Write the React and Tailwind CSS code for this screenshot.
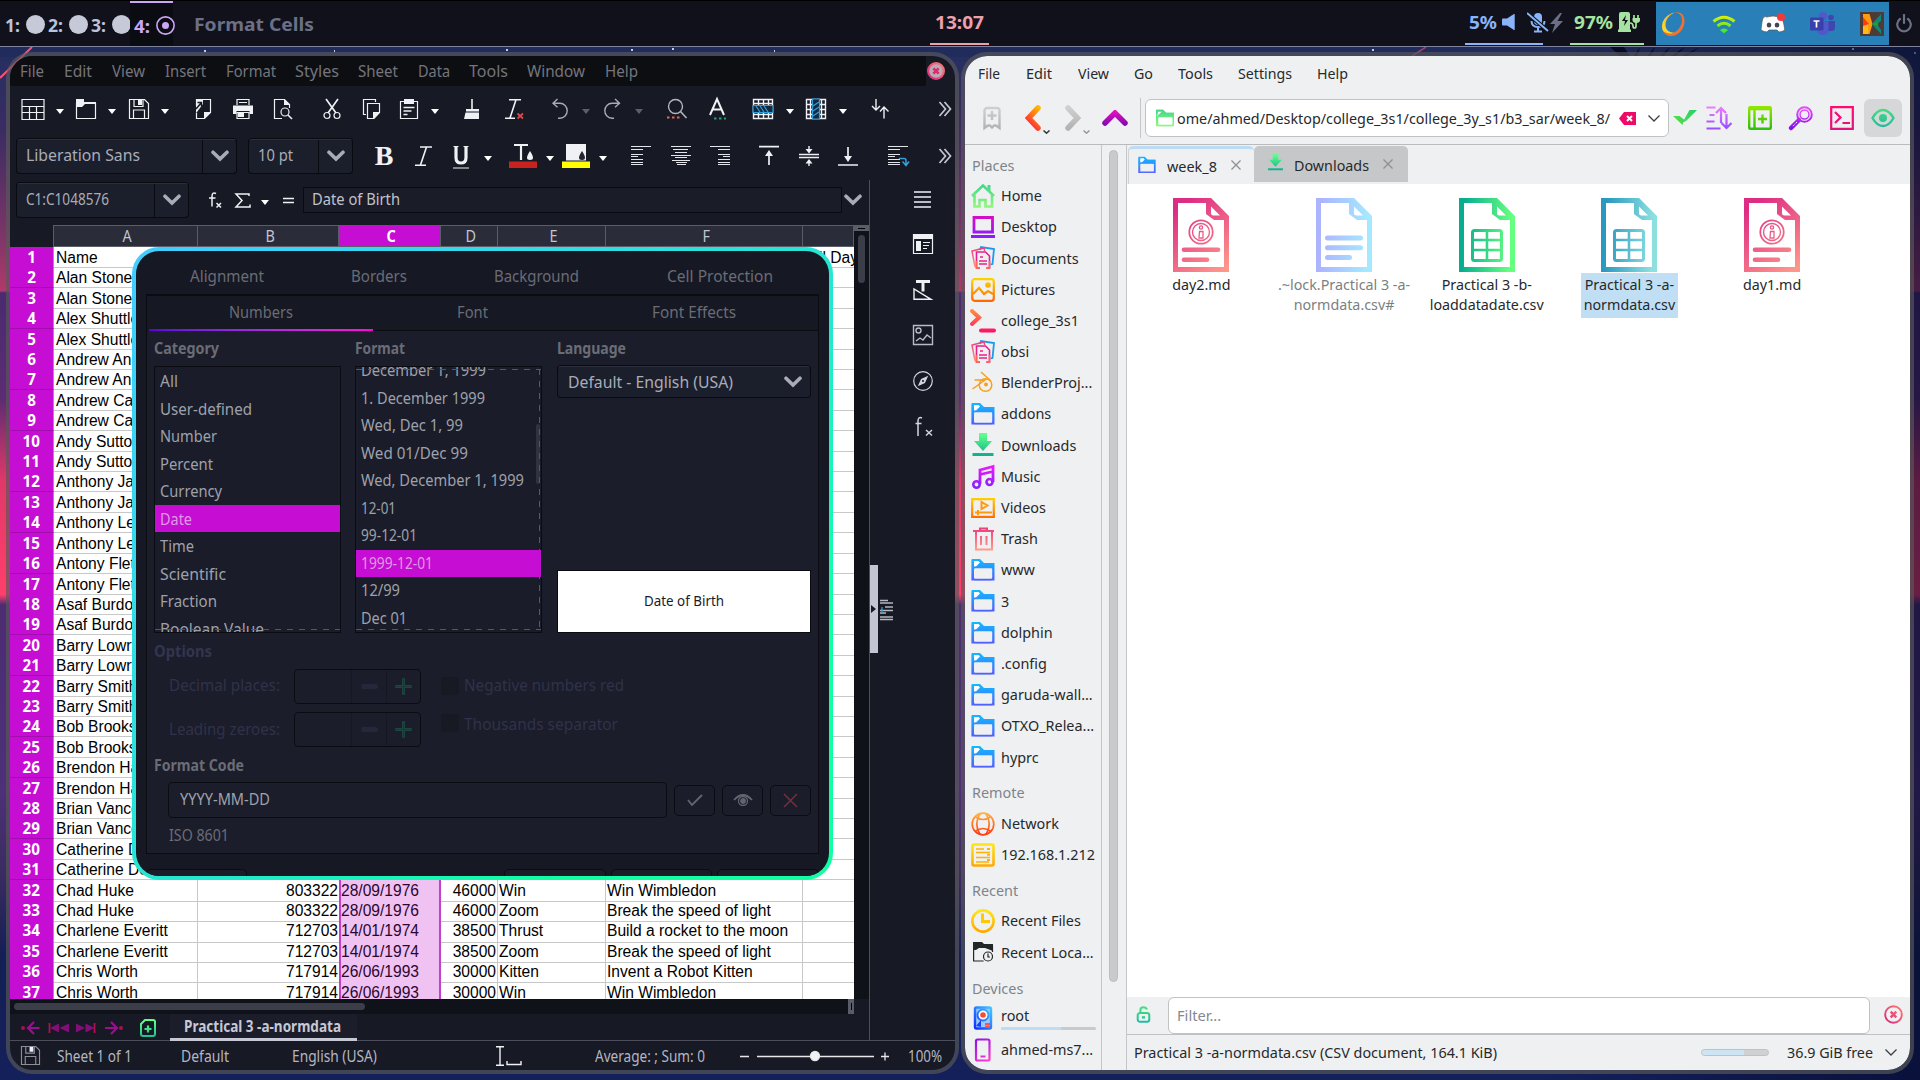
import React, { useLayoutEffect, useRef, useState } from "react";

/* Text squeezed or stretched horizontally to fill the width given by its class. */
function Fit({ className = "", children }) {
  const outer = useRef(null);
  const inner = useRef(null);
  const [scale, setScale] = useState(1);
  useLayoutEffect(() => {
    const box = parseFloat(getComputedStyle(outer.current).width);
    const text = parseFloat(getComputedStyle(inner.current).width);
    if (text) setScale(box / text);
  }, []);
  return (
    <span ref={outer} className={"inline-block shrink-0 whitespace-nowrap " + className}>
      <span ref={inner} className="inline-block origin-left" style={{ transform: `scaleX(${scale})` }}>
        {children}
      </span>
    </span>
  );
}

const GRADS = [
  ["gGreen", "#46d98a", "#8df77a"],
  ["gPurple", "#d40dc8", "#8a1cff"],
  ["gOrange", "#ffd000", "#ff6a00"],
  ["gRed", "#ff8a3c", "#ff1564"],
  ["gBlue", "#12b8ff", "#5060ff"],
  ["gDown", "#5cff88", "#10b090"],
  ["gMusic", "#e818ff", "#8a20ff"],
  ["gTrash", "#f0407c", "#ff9a8c"],
  ["gNet", "#ffb040", "#ff3c10"],
  ["gYellow", "#ffe414", "#ffaa00"],
  ["gSort", "#f07cff", "#9a50ff"],
  ["gLime", "#8fe600", "#30c010"],
  ["gMag", "#ee48ff", "#8a10f0"],
  ["gTeal", "#48e07c", "#20b8a0"],
  ["gWifi", "#f4f000", "#20e838"],
  ["gGray", "#cfcfcf", "#b4b4b4"],
  ["gHot", "#ff0a70", "#e0147a"],
];

function Defs() {
  return (
    <svg className="absolute h-0 w-0">
      <defs>
        {GRADS.map(([id, a, b]) => (
          <linearGradient key={id} id={id} gradientUnits="userSpaceOnUse" x1="0" y1="2" x2="0" y2="22">
            <stop offset="0" stopColor={a} />
            <stop offset="1" stopColor={b} />
          </linearGradient>
        ))}
        <linearGradient id="gBack" gradientUnits="userSpaceOnUse" x1="4" y1="20" x2="20" y2="4">
          <stop offset="0" stopColor="#ff1040" />
          <stop offset="1" stopColor="#ffb800" />
        </linearGradient>
        <linearGradient id="gUp" gradientUnits="userSpaceOnUse" x1="0" y1="0" x2="0" y2="16">
          <stop offset="0" stopColor="#f010c0" />
          <stop offset="1" stopColor="#7a08b0" />
        </linearGradient>
        <linearGradient id="gCheck" gradientUnits="userSpaceOnUse" x1="0" y1="20" x2="24" y2="4">
          <stop offset="0" stopColor="#62dc48" />
          <stop offset="1" stopColor="#22d268" />
        </linearGradient>
        <linearGradient id="gDisk" gradientUnits="userSpaceOnUse" x1="2" y1="20" x2="22" y2="4">
          <stop offset="0" stopColor="#1030ff" />
          <stop offset="1" stopColor="#40c8ff" />
        </linearGradient>
        <linearGradient id="gPhone" gradientUnits="userSpaceOnUse" x1="4" y1="2" x2="20" y2="22">
          <stop offset="0" stopColor="#9010e8" />
          <stop offset="1" stopColor="#ff40c8" />
        </linearGradient>
        <linearGradient id="gClose" gradientUnits="userSpaceOnUse" x1="2" y1="22" x2="22" y2="2">
          <stop offset="0" stopColor="#d82a80" />
          <stop offset="1" stopColor="#ff7a70" />
        </linearGradient>
      </defs>
    </svg>
  );
}

function Ico({ className = "h-5 w-5", vb = "0 0 20 20", children, sw = 1.2, color = "#f0f1f4" }) {
  return (
    <svg className={"block shrink-0 overflow-visible " + className} viewBox={vb} fill="none" stroke={color} strokeWidth={sw}>
      {children}
    </svg>
  );
}

const Caret = ({ className = "", dim }) => (
  <svg className={"mt-1 block h-[5px] w-2 shrink-0 " + className} viewBox="0 0 8 5">
    <path d="M0 0h8L4 5z" fill={dim ? "#5c5e69" : "#ffffff"} />
  </svg>
);

const Chevron = ({ className = "h-3 w-[18px]", color = "#a9acb8" }) => (
  <svg className={"block shrink-0 " + className} viewBox="0 0 18 12" fill="none" stroke={color} strokeWidth="3.6" strokeLinecap="round" strokeLinejoin="miter">
    <path d="M2 2.2 9 9l7-6.800" />
  </svg>
);

/* ---------- office toolbar drawings ---------- */
const I = {
  sheet: (
    <>
      <path d="M-1 .5h22v20h-22zM-1 7.500h22M-1 13.500h22M6.500 8v12M13.500 8v12" />
    </>
  ),
  folder: (
    <>
      <path d="M.5 4.500h19v15H.5z" />
      <path d="M0 0h8v3h12v2H9L6 8H0z" fill="#f0f1f4" stroke="none" />
    </>
  ),
  save: (
    <>
      <path d="M.5.500h15l4 4v15H.5zM4.500 19.500V11h11v8.500M5 .5v7h9v-7" />
      <path d="M9 1h4v5H9z" fill="#f0f1f4" stroke="none" />
    </>
  ),
  export: (
    <>
      <path d="M3.500 7V.500h14v13l-6 6h-8v-6" />
      <path d="M3 0h7v5L4 13H3zM11 13h7l-7 7z" fill="#f0f1f4" stroke="none" />
      <path d="M3 10 8.500 3.500M4.500 3.500h4v4" stroke="#181924" strokeWidth="1.500" />
    </>
  ),
  print: (
    <>
      <path d="M4 6V.500h12V6M6 3.500h8" />
      <path d="M0 6.500h20V15h-3.500v-3h-13v3H0z" fill="#f0f1f4" stroke="none" />
      <path d="M4 13.500h12v6H4z" />
      <path d="M5 14h6v4H5z" fill="#f0f1f4" stroke="none" />
    </>
  ),
  preview: (
    <>
      <path d="M9 19.500H1.500V.500h10l5 5V9" />
      <path d="M11 0v6h6z" fill="#f0f1f4" stroke="none" />
      <circle cx="12" cy="13" r="4" />
      <path d="m15 16 4 4" strokeWidth="1.600" />
    </>
  ),
  cut: (
    <>
      <path d="M4 0 14 14M16 0 6 14" strokeWidth="1.700" />
      <circle cx="5" cy="16.500" r="3" />
      <circle cx="15" cy="16.500" r="3" />
    </>
  ),
  copy: (
    <>
      <path d="M5 15.500H2.500v-15h12V3" />
      <path d="M6.500 4.500h12v9l-5.500 6H6.500z" />
      <path d="M12 13h7l-7 7z" fill="#f0f1f4" stroke="none" />
    </>
  ),
  paste: (
    <>
      <path d="M1.500 2.500h17v17h-17z" />
      <path d="M5 0h10v5H5z" fill="#f0f1f4" stroke="none" />
      <path d="M4.500 8.500h11M4.500 12h8M4.500 15.500h4" strokeWidth="1.400" />
    </>
  ),
  broom: (
    <>
      <path d="M10 0v10" strokeWidth="1.600" />
      <path d="M4 10h13v2.500H4zM3.500 13.500h13.500V20H2z" fill="#f0f1f4" stroke="none" />
    </>
  ),
  clear: (
    <>
      <path d="M4 .7h12M0 19.300h10M11 .7 5 19" strokeWidth="1.600" />
      <path d="m12.500 14.500 5.500 5m0-5-5.500 5" stroke="#e04a4a" strokeWidth="1.700" />
    </>
  ),
  undo: <path d="M7.500 0 3 4.300l4.500 4M3 4.300h7a7 7.300 0 0 1 0 15H8" stroke="#a9abb3" strokeWidth="1.400" />,
  redo: <path d="M13 0l4.500 4.300-4.500 4M17 4.300h-7a7 7.300 0 0 0 0 15h2" stroke="#a9abb3" strokeWidth="1.400" />,
  find: (
    <>
      <circle cx="8.500" cy="7.500" r="7" stroke="#b4b6bd" strokeWidth="1.400" />
      <path d="m13.500 12.500 6 6.500" stroke="#b4b6bd" strokeWidth="1.600" />
      <path d="M0 18.500h13" stroke="#e0694a" strokeWidth="2" strokeDasharray="2.500 2.500" />
    </>
  ),
  spell: (
    <>
      <path d="M2 16 9 0l7 16M5 10.500h8" strokeWidth="2" />
      <path d="M6 19.500h12" stroke="#26a269" strokeWidth="2" strokeDasharray="2.500 2.500" />
    </>
  ),
  rows: (
    <>
      <path d="M.5.500h19v19H.5zM.5 4.500h19M.5 15.500h19M5.500.500v19M10.500.500v19M15.500.500v19" strokeWidth="1.400" />
      <path d="M0 6.500h20v7H0z" fill="#132a3f" stroke="#33a0dc" />
      <path d="m3 7 4 6m0-6 4 6m0-6 4 6" stroke="#33a0dc" />
    </>
  ),
  cols: (
    <>
      <path d="M.5.500h19v19H.5zM.5 5.500h19M.5 10.500h19M.5 15.500h19M4.500.500v19M15.500.500v19" strokeWidth="1.400" />
      <path d="M6.500 0v20h7V0z" fill="#132a3f" stroke="#33a0dc" />
      <path d="m7 7 6-4m-6 9 6-4m-6 9 6-4" stroke="#33a0dc" />
    </>
  ),
  sort: <path d="M4 0v10M0 7l4 4 4-4M12 19.500V8M8 12.500 12 8l4.500 4.500" strokeWidth="1.400" />,
  more: <path d="m4.500 3 6 7-6 7m5-14 6 7-6 7" stroke="#c3c5cf" strokeWidth="1.700" />,
  alignL: <path d="M0 .5h20M0 3.500h12M0 8.500h12M0 10.500h7M0 13.500h12M0 16.500h12M0 18.500h12" stroke="#e2e4e9" />,
  alignC: <path d="M0 .5h20M2 3.500h15M4 6.500h12M0 9.500h20M4 11.500h12M1 14.500h18M5 16.500h11M6 18.500h9" stroke="#e2e4e9" />,
  alignR: <path d="M0 .5h20M8 3.500h12M8 8.500h12M13 10.500h7M8 13.500h12M8 16.500h12M8 18.500h12" stroke="#e2e4e9" />,
  top: (
    <>
      <path d="M0 .6h20M10 19V8" strokeWidth="1.700" />
      <path d="m6 10 4-6 4 6z" fill="#f0f1f4" stroke="none" />
    </>
  ),
  mid: (
    <>
      <path d="M0 8.500h20M0 11.500h20M10 0v5M10 20v-5" strokeWidth="1.400" />
      <path d="m6.500 3 3.500 4.500L13.500 3zM6.500 17.500 10 13l3.500 4.500z" fill="#f0f1f4" stroke="none" />
    </>
  ),
  bottom: (
    <>
      <path d="M0 19h20M10 1v11" strokeWidth="1.700" />
      <path d="m6 10 4 6 4-6z" fill="#f0f1f4" stroke="none" />
    </>
  ),
  wrap: (
    <>
      <path d="M0 .5h20M0 3.500h12M0 8.500h12M0 10.500h7M0 13.500h12M0 16.500h12M0 18.500h12" stroke="#e2e4e9" />
      <path d="M11 12.500h5q2 0 2 2v4m-3.500-3 3.500 4 3-4" stroke="#33a0dc" strokeWidth="1.500" />
    </>
  ),
};

const TB1 = [
  ["sheet", "ml-[13px]"], ["c", "ml-[13px]"], ["folder", "ml-3"], ["c", "ml-3"], ["save", "ml-[13px]"], ["c", "ml-3"],
  ["export", "ml-6"], ["print", "ml-5"], ["preview", "ml-5"], ["cut", "ml-[29px]"], ["copy", "ml-[19px]"], ["paste", "ml-[18px]"],
  ["c", "ml-3"], ["broom", "ml-[23px]"], ["clear", "ml-[23px]"], ["undo", "ml-[25px]"], ["d", "ml-3"], ["redo", "ml-3"],
  ["d", "ml-[13px]"], ["find", "ml-6"], ["spell", "ml-[21px]"], ["rows", "ml-[25px]"], ["c", "ml-[13px]"], ["cols", "ml-3"],
  ["c", "ml-[13px]"], ["sort", "ml-[25px]"], ["more", "ml-[43px]"],
];

function Tools({ items }) {
  return items.map(([k, m], i) =>
    k === "c" || k === "d" ? <Caret key={i} className={m} dim={k === "d"} /> : <Ico key={i} className={"h-5 w-5 " + m}>{I[k]}</Ico>
  );
}

const MENU = [
  ["File", "w-6 ml-[10px]"], ["Edit", "w-[28px] ml-5"], ["View", "w-[33px] ml-5"], ["Insert", "w-[41px] ml-5"], ["Format", "w-[50px] ml-5"],
  ["Styles", "w-[44px] ml-[19px]"], ["Sheet", "w-10 ml-[19px]"], ["Data", "w-8 ml-5"], ["Tools", "w-[39px] ml-[19px]"],
  ["Window", "w-[58px] ml-[19px]"], ["Help", "w-[33px] ml-5"],
];

const COMBO = "flex shrink-0 items-center rounded-[4px] border border-[#0a0b10] border-t-[#2d2f3d] bg-[#1b1e2b] shadow-[0_-1px_0_#0a0b10] text-[#a9acb8]";

const NAMES = [
  "Name", "Alan Stoner", "Alan Stoner", "Alex Shuttleworth", "Alex Shuttleworth", "Andrew Anderson", "Andrew Anderson",
  "Andrew Castle", "Andrew Castle", "Andy Sutton", "Andy Sutton", "Anthony James", "Anthony James", "Anthony Lewis",
  "Anthony Lewis", "Antony Fletcher", "Antony Fletcher", "Asaf Burdon", "Asaf Burdon", "Barry Lowry", "Barry Lowry",
  "Barry Smith", "Barry Smith", "Bob Brooks", "Bob Brooks", "Brendon Hall", "Brendon Hall", "Brian Vance", "Brian Vance",
  "Catherine Dean", "Catherine Dean",
];
const FULL = [
  ["Chad Huke", "803322", "28/09/1976", "46000", "Win", "Win Wimbledon"],
  ["Chad Huke", "803322", "28/09/1976", "46000", "Zoom", "Break the speed of light"],
  ["Charlene Everitt", "712703", "14/01/1974", "38500", "Thrust", "Build a rocket to the moon"],
  ["Charlene Everitt", "712703", "14/01/1974", "38500", "Zoom", "Break the speed of light"],
  ["Chris Worth", "717914", "26/06/1993", "30000", "Kitten", "Invent a Robot Kitten"],
  ["Chris Worth", "717914", "26/06/1993", "30000", "Win", "Win Wimbledon"],
];
const ROWS = [...NAMES.map((n, i) => [n, "", "", "", "", "", i === 0 ? "Full Day" : ""]), ...FULL.map((r) => [...r, ""])];
const GRID = "grid grid-cols-[44px_144px_141px_102px_57px_108px_197px_51px]";

function Sheet() {
  return (
    <div className="w-[844px] overflow-hidden">
      <div className={GRID + " h-[22px] text-base text-[#c3c5d0]"}>
        <div className="border-r border-[#5a5c69]" />
        {["A", "B", "C", "D", "E", "F", ""].map((c, i) => (
          <div
            key={i}
            className={
              "flex items-center justify-center border-y border-r border-[#5a5c69] pl-1 leading-none " +
              (c === "C" ? "bg-[#c60dd3] font-bold text-white" : "bg-[#2b2c3a]")
            }
          >
            <span className="-mt-px scale-x-90">{c}</span>
          </div>
        ))}
      </div>
      <div className="h-[752px] overflow-hidden bg-white font-['Liberation_Sans',Arial,sans-serif] text-[15.6px] text-black">
        {ROWS.map((r, i) => (
          <div key={i} className={GRID + " h-[20.42px] leading-[21.2px] whitespace-nowrap"}>
            <div className="border-r border-b border-r-[#999] border-b-[#a30cae] bg-[#c60dd3] text-center font-['Noto_Sans',sans-serif] text-base font-bold leading-[20px] text-white">
              <span className="inline-block scale-x-[.95]">{i + 1}</span>
            </div>
            <div className="overflow-hidden border-r border-b border-[#c8c8c8] pl-0.5">{r[0]}</div>
            <div className="border-b border-[#c8c8c8] pr-px text-right">{r[1]}</div>
            <div className="border-x-2 border-b border-x-[#c43fce] border-b-[#d3a5d6] bg-[#efc2f2] text-[#2c0630]">{r[2]}</div>
            <div className="border-r border-b border-[#c8c8c8] pr-px text-right">{r[3]}</div>
            <div className="border-r border-b border-[#c8c8c8] pl-px">{r[4]}</div>
            <div className="border-r border-b border-[#c8c8c8] pl-px">{r[5]}</div>
            <div className="flex justify-end overflow-hidden border-b border-[#c8c8c8]"><span className="-mr-1">{r[6]}</span></div>
          </div>
        ))}
      </div>
    </div>
  );
}

function OfficeWindow() {
  return (
    <div className="h-[1022px] w-[953px] shrink-0 overflow-hidden rounded-[26px] border-4 border-[#595959aa] bg-[#171924] bg-clip-padding font-['Noto_Sans',sans-serif] text-base">
      <div className="flex h-[30px] items-center text-[#74757c]">
        <div className="flex h-full w-[916px] items-center bg-[#0d0e12] pb-px">
          {MENU.map(([t, w]) => <Fit key={t} className={w}>{t}</Fit>)}
        </div>
        <svg className="ml-px h-[18px] w-[18px]" viewBox="0 0 24 24">
          <circle cx="12" cy="12" r="10.500" fill="#b9aab5" stroke="url(#gClose)" strokeWidth="3" />
          <path d="m8.500 8.500 7 7m0-7-7 7" stroke="#dd2a6c" strokeWidth="3.500" />
        </svg>
      </div>
      <div className="flex h-[46px] items-center"><Tools items={TB1} /></div>
      <div className="flex h-[48px] items-center">
        <div className={COMBO + " ml-1.5 h-[35px] w-[221px]"}>
          <div className="h-full w-[186px] border-r border-[#0a0b10] pl-[9px] leading-[31px]"><Fit className="w-[114px]">Liberation Sans</Fit></div>
          <div className="flex flex-1 justify-center"><Chevron /></div>
        </div>
        <div className={COMBO + " ml-[11px] h-[35px] w-[105px]"}>
          <div className="h-full w-[70px] border-r border-[#0a0b10] pl-[9px] leading-[31px]"><Fit className="w-[35px]">10 pt</Fit></div>
          <div className="flex flex-1 justify-center"><Chevron /></div>
        </div>
        <span className="ml-[20px] w-[22px] text-center font-['Liberation_Serif',serif] text-[28px] font-bold leading-none text-[#f0f1f4]">B</span>
        <Ico className="ml-[19px] h-5 w-5" sw={1.600}><path d="M6 1h12M1 19.300h11M12.500 1 6.500 19" /></Ico>
        <Ico className="ml-4 h-[25px] w-5" vb="-1 -3 20 25" sw={3.200}>
          <path d="M5 -1v11.500q0 5.500 5 5.500t5-5.500V-1" />
          <path d="M2.500 -.500h5M12.500 -.500h5" strokeWidth="1" />
          <path d="M2 21h16" strokeWidth="1.200" />
        </Ico>
        <Caret className="ml-[14px]" />
        <Ico className="ml-[17px] h-6 w-7" vb="0 0 28 24">
          <path d="M5 1h14M12 1v15" strokeWidth="2.200" />
          <path d="M21 7q-6 9 0 9t0-9" fill="#f0f1f4" stroke="none" />
          <path d="M0 17.500h28V24H0z" fill="#c9211e" stroke="none" />
        </Ico>
        <Caret className="ml-[9px]" />
        <Ico className="ml-2 h-6 w-7" vb="0 0 28 24">
          <path d="M4 0h20v16.500H4z" fill="#f0f1f4" stroke="none" />
          <path d="M20 7q-6 9 0 9t0-9" fill="#222430" stroke="none" />
          <path d="M0 17.500h28V24H0z" fill="#ffff00" stroke="none" />
        </Ico>
        <Caret className="ml-[9px]" />
        <Tools items={[["alignL", "ml-6"], ["alignC", "ml-5"], ["alignR", "ml-[19px]"], ["top", "ml-[29px]"], ["mid", "ml-5"], ["bottom", "ml-[19px]"], ["wrap", "ml-[30px]"], ["more", "ml-[27px]"]]} />
      </div>
      <div className="flex h-[861px]">
        <div className="w-[860px] shrink-0 border-r border-[#4c4e5b]">
          <div className="flex h-[45px] items-center pb-[5px]">
            <div className={COMBO + " ml-1.5 h-[35px] w-[173px]"}>
              <div className="h-full w-[138px] border-r border-[#0a0b10] pl-[9px] leading-[31px]"><Fit className="w-[83px]">C1:C1048576</Fit></div>
              <div className="flex flex-1 justify-center"><Chevron /></div>
            </div>
            <Ico className="ml-4 h-5 w-5" sw={1.500}><path d="M11 3.500q-4-2-4 3v10M4 8h6.500M11.500 13l4.500 4.500m0-4.500-4.500 4.500" /></Ico>
            <Ico className="ml-2 h-5 w-5" sw={1.500}><path d="M16 6V4H3l6 6.500L3 17h14v-2.500" /></Ico>
            <Caret className="ml-2" />
            <Ico className="ml-[9px] h-5 w-5" sw={1.500}><path d="M5 8.500h11M5 12.500h11" /></Ico>
            <div className="ml-[5px] h-[26px] w-[539px] border border-[#0a0b10] bg-[#1a1c28] pl-2 leading-[23px] text-[#c0c2cc]"><Fit className="w-[88px]">Date of Birth</Fit></div>
            <Chevron className="ml-0.5 h-3 w-[18px]" />
          </div>
          <div className="flex">
            <Sheet />
            <div className="flex w-[15px] flex-col items-center bg-[#101219]">
              <div className="flex h-1.5 w-full items-center justify-center bg-[#5a5c69]"><div className="h-px w-[7px] bg-black" /></div>
              <div className="mt-1 h-12 w-[7px] rounded-full bg-[#3b3d49]" />
            </div>
          </div>
          <div className="flex h-[15px] items-center">
            <div className="flex h-full w-[838px] items-center bg-[#101219] pl-1"><div className="h-[7px] w-[351px] rounded-full bg-[#3b3d49]" /></div>
            <div className="flex h-full w-1.5 items-center justify-center bg-[#5a5c69]"><div className="h-[7px] w-px bg-black" /></div>
          </div>
          <div className="flex h-[27px] items-center">
            <svg className="ml-[11px] h-4 w-[102px]" viewBox="0 0 102 16" fill="none" stroke="#9a1090" strokeWidth="2.200">
              <path d="M6.500 8h12M13 2 7 8l6 6M84 8h12M90 2l6 6-6 6" />
              <circle cx="2" cy="8" r="2" fill="#a81050" stroke="none" />
              <circle cx="100" cy="8" r="2" fill="#a81050" stroke="none" />
              <path d="M38 3.500v9L29 8zM48 3.500v9L38.500 8zM55 3.500v9L64 8zM64.500 3.500v9L73.500 8z" fill="#801078" stroke="none" />
              <path d="M28.500 3v10M73.500 3v10" stroke="#b01050" strokeWidth="1.800" />
            </svg>
            <svg className="ml-[17px] h-[18px] w-4" viewBox="0 0 16 18" fill="none" stroke="url(#gDown)" strokeWidth="2">
              <path d="M5 1h8a2 2 0 0 1 2 2v12a2 2 0 0 1-2 2H3a2 2 0 0 1-2-2V5z" />
              <path d="M8 6.500v7M4.500 10h7" strokeWidth="2.200" />
            </svg>
            <div className="ml-[14px] h-full w-[187px] border-b-[3px] border-[#c6c8d6] bg-[#1b1d2a] pl-[14px] font-bold leading-[25px] text-[#c6c8d6]">
              <Fit className="w-[157px]">Practical 3 -a-normdata</Fit>
            </div>
          </div>
        </div>
        <div className="flex w-[85px] items-center">
          <div className="-mt-1 flex h-[88px] w-2 items-center bg-[#c3c5d2]"><svg className="h-2 w-1.5" viewBox="0 0 6 8"><path d="M1 0v8l5-4z" fill="#171924" /></svg></div>
          <svg className="ml-[2px] h-6 w-[13px]" viewBox="0 0 13 24" stroke="#b4b6c0" strokeWidth="1.300">
            <path d="M0 1.500h8M0 4h13M5 8h8M0 11.500h13M0 14h6M0 18h13M0 20.500h13" />
            <path d="M2 8v6" stroke="#33a0dc" />
          </svg>
          <div className="flex h-full flex-1 flex-col items-center pt-[10px] pr-[3px]">
            <Ico className="h-[18px] w-[17px]" vb="0 0 17 18" color="#b9bbc6" sw={2}><path d="M0 2h17M0 7h17M0 12h17M0 17h17" /></Ico>
            <Ico className="mt-[26px] h-5 w-5"><path d="M.5.500h19v19H.5z" /><path d="M0 0h20v5H0zM3 7h5v10H3z" fill="#f0f1f4" stroke="none" /><path d="M10 8.500h7M10 11.500h6M10 14.500h4" /></Ico>
            <Ico className="mt-[26px] h-5 w-5" sw={1.400}><path d="M1 9v10.300h17z" /><path d="M3 1.500h14M10 1.500v10" strokeWidth="3" /></Ico>
            <Ico className="mt-[25px] h-5 w-5" color="#b9bbc6" sw={1.400}><path d="M.5.500h19v19H.5zM3 16l4-3 3 2 4-5 4 3" /><circle cx="5.500" cy="5.500" r="2.500" /></Ico>
            <Ico className="mt-[26px] h-5 w-5" color="#d5d6dd"><circle cx="10" cy="10" r="9.300" /><path d="m14 6-2.500 5.500L6 14l2.500-5.500z" fill="#d5d6dd" /><circle cx="10" cy="10" r="1" fill="#171924" stroke="none" /></Ico>
            <Ico className="mt-[26px] h-5 w-5" color="#d5d6dd" sw={1.500}><path d="M9 1q-4-1.500-4 3v15M2.500 6.500h6M13 13l6 5.500m0-5.500-6 5.500" /></Ico>
          </div>
        </div>
      </div>
      <div className="-mt-px flex h-[30px] items-center border-t border-[#4c4e5b] text-[#b4b6c2]">
        <Ico className="ml-[11px] h-[19px] w-[19px]" color="#8c8e98">{I.save}</Ico>
        <Fit className="ml-[17px] w-[75px]">Sheet 1 of 1</Fit>
        <Fit className="ml-[49px] w-12">Default</Fit>
        <Fit className="ml-[63px] w-[85px]">English (USA)</Fit>
        <Ico className="ml-[119px] h-5 w-[26px]" vb="0 0 26 20" sw={1.400}><path d="M0 .7h8M4 .7v18.600M0 19.300h8M11 15v3.500h14V15" /></Ico>
        <Fit className="ml-[73px] w-[110px]">Average: ; Sum: 0</Fit>
        <svg className="ml-[35px] h-3 w-[150px]" viewBox="0 0 150 12" stroke="#e6e7ec" strokeWidth="1.300">
          <path d="M0 6.500h9M17 6.500h117M141 6.500h8M145 2.500v8" />
          <circle cx="75" cy="6" r="4.500" fill="#f2f2f5" />
        </svg>
        <Fit className="ml-[18px] w-[34px]">100%</Fit>
      </div>
    </div>
  );
}

/* ---------- format dialog ---------- */
const CATS = [["All", "w-[18px]"], ["User-defined", "w-[92px]"], ["Number", "w-[57px]"], ["Percent", "w-[53px]"], ["Currency", "w-[62px]"], ["Date", "w-8"], ["Time", "w-[34px]"], ["Scientific", "w-[66px]"], ["Fraction", "w-[57px]"], ["Boolean Value", "w-[104px]"]];
const FMTS = [["December 1, 1999", "w-[125px]"], ["1. December 1999", "w-[124px]"], ["Wed, Dec 1, 99", "w-[102px]"], ["Wed 01/Dec 99", "w-[107px]"], ["Wed, December 1, 1999", "w-[163px]"], ["12-01", "w-[35px]"], ["99-12-01", "w-14"], ["1999-12-01", "w-[72px]"], ["12/99", "w-[39px]"], ["Dec 01", "w-[46px]"]];

function List({ items, sel, className }) {
  return (
    <div className={"h-full overflow-hidden " + className}>
      {items.map(([t, w]) => (
        <div key={t} className={"h-[27.55px] " + (t === sel ? "bg-[#c60dd3] text-[#dd9ae2]" : "text-[#9ea1ac]")}>
          <Fit className={w}>{t}</Fit>
        </div>
      ))}
    </div>
  );
}
const HDASH = "absolute h-px bg-[repeating-linear-gradient(90deg,#555763_0_6px,transparent_6px_12px)]";

const Spin = ({ className }) => (
  <div className={"flex h-[35px] w-[127px] shrink-0 items-center rounded-[4px] border border-[#0b0c12] " + className}>
    <div className="h-full w-[57px] border-r border-[#151722]" />
    <div className="flex h-full w-[35px] items-center justify-center border-r border-[#151722]"><div className="h-[5px] w-[17px] rounded-full bg-[#25273a]" /></div>
    <svg className="mx-auto h-[17px] w-[17px]" viewBox="0 0 18 18"><path d="M8 1h2v7h7v2h-7v7H8v-7H1V8h7z" fill="#1c3038" stroke="#1e443f" strokeWidth="1.300" /></svg>
  </div>
);

const Btn = ({ children, className = "" }) => (
  <div className={"flex h-[31px] items-center justify-center rounded-[5px] border border-[#0b0c12] " + className}>{children}</div>
);

function Dialog() {
  return (
    <div className="absolute top-[247px] left-[132px] h-[633px] w-[701px] rounded-[27px] bg-gradient-to-br from-[#42ccff] via-[#22e8cf] via-55% to-[#10ffa2] to-80% p-1 font-['Noto_Sans',sans-serif] text-base">
      <div className="h-full overflow-hidden rounded-[23px] bg-[#161823] px-[10px] text-[#6a6c76]">
        <div className="flex h-[43px] items-center pt-1.5">
          <Fit className="ml-[44px] w-[74px]">Alignment</Fit>
          <Fit className="ml-[87px] w-14">Borders</Fit>
          <Fit className="ml-[87px] w-[85px]">Background</Fit>
          <Fit className="ml-[88px] w-[106px]">Cell Protection</Fit>
        </div>
        <div className="h-[560px] border border-t-2 border-[#0b0c12] bg-[#1b1d2b]">
          <div className="flex h-[35px] bg-[#161823]">
            <div className="ml-0.5 h-full w-[224px] bg-gradient-to-r from-[#5a00dc] to-[#ff00dc] pb-0.5"><div className="h-full bg-[#161823] pl-20 leading-[32px]"><Fit className="w-16">Numbers</Fit></div></div>
            <div className="flex flex-1 border-b border-[#0b0c12] leading-[32px]"><Fit className="ml-[84px] w-[31px]">Font</Fit><Fit className="ml-[164px] w-[84px]">Font Effects</Fit></div>
          </div>
          <div className="flex h-[35px] items-center pb-px font-bold">
            <Fit className="ml-[7px] w-[65px]">Category</Fit><Fit className="ml-[136px] w-[50px]">Format</Fit><Fit className="ml-[152px] w-[69px]">Language</Fit>
          </div>
          <div className="flex h-[267px] pl-[7px]">
            <div className="relative h-full w-[187px] border border-[#0b0c12] bg-[#1a1c29]">
              <List items={CATS} sel="Date" className="leading-[28px] [&>div]:pl-[5px]" />
              <div className={HDASH + " inset-x-0 bottom-0.5"} />
            </div>
            <div className="relative ml-[14px] h-full w-[187px] border border-[#0b0c12] bg-[#1a1c29]">
              <List items={FMTS} sel="1999-12-01" className="leading-[26px] [&>div]:pl-[5px] [&>div:first-child]:-mt-[10px]" />
              <div className="absolute top-[57px] right-px h-[60px] w-1 rounded-full bg-[#30323f]" />
              <div className={HDASH + " inset-x-0 top-0.5"} />
              <div className={HDASH + " inset-x-0 bottom-0.5"} />
              <div className="absolute top-0.5 right-px bottom-0.5 w-px bg-[repeating-linear-gradient(180deg,#555763_0_6px,transparent_6px_12px)]" />
            </div>
            <div className="ml-[15px] flex w-[254px] flex-col justify-between">
              <div className={COMBO + " h-8 w-full justify-between pr-2 pl-[10px]"}><Fit className="w-[165px]">Default - English (USA)</Fit><Chevron /></div>
              <div className="flex h-[63px] items-center justify-center border border-[#0b0c12] bg-white pb-px text-sm text-[#1a1c28]"><Fit className="w-20">Date of Birth</Fit></div>
            </div>
          </div>
          <div className="h-9 pl-[7px] font-bold leading-[36px] text-[#33354e]"><Fit className="w-[58px]">Options</Fit></div>
          <div className="flex pl-[22px] text-[#303249]">
            <div className="leading-[33px]"><Fit className="w-[111px]">Decimal places:</Fit></div>
            <Spin className="ml-[14px]" />
            <div className="mt-2 ml-5 h-[18px] w-[18px] rounded-[3px] bg-[#171923]" />
            <div className="ml-[5px] leading-[33px]"><Fit className="w-40">Negative numbers red</Fit></div>
          </div>
          <div className="mt-2 flex pl-[22px] text-[#303249]">
            <div className="leading-[34px]"><Fit className="w-[111px]">Leading zeroes:</Fit></div>
            <Spin className="ml-[14px]" />
            <div className="mt-0.5 ml-5 h-[18px] w-[18px] rounded-[3px] bg-[#171923]" />
            <div className="ml-[5px] leading-[25px]"><Fit className="w-[154px]">Thousands separator</Fit></div>
          </div>
          <div className="h-[35px] pl-[7px] font-bold leading-[36px]"><Fit className="w-[90px]">Format Code</Fit></div>
          <div className="flex items-center pl-[21px]">
            <div className="h-9 w-[499px] rounded-[4px] border border-[#0b0c12] pl-[11px] leading-[33px] text-[#9ea1ac]"><Fit className="w-[90px]">YYYY-MM-DD</Fit></div>
            <Btn className="ml-[7px] w-[41px]"><svg className="h-3 w-4" viewBox="0 0 16 12" fill="none" stroke="#63656f" strokeWidth="1.800"><path d="m1 6 4 5L15 1" /></svg></Btn>
            <Btn className="ml-[7px] w-[41px]"><svg className="h-3 w-5" viewBox="0 0 20 12" fill="none" stroke="#63656f" strokeWidth="1.800"><path d="M1 6Q10-4 19 6" /><circle cx="10" cy="7" r="4.500" strokeWidth="1.300" /><circle cx="10" cy="7" r="2" fill="#63656f" /></svg></Btn>
            <Btn className="ml-[7px] w-[41px]"><svg className="h-[15px] w-[15px]" viewBox="0 0 15 15" stroke="#74303c" strokeWidth="1.500"><path d="m1 1 13 13M14 1 1 14" /></svg></Btn>
          </div>
          <div className="pl-[22px] leading-[34px]"><Fit className="w-[60px]">ISO 8601</Fit></div>
        </div>
        <div className="mt-[15px] flex">
          <Btn className="w-[101px] bg-[#1a1c28]" /><Btn className="ml-[257px] w-[102px] bg-[#1a1c28]" /><Btn className="ml-[5px] w-[102px] bg-[#1a1c28]" /><Btn className="ml-[5px] w-[102px] bg-[#1a1c28]" />
        </div>
      </div>
    </div>
  );
}

/* ---------- file manager ---------- */
const folderPath = (
  <>
    <path d="M1.200 21.800V2.200h7l3.500 3.500h11v16.100z" stroke="url(#gBlue)" strokeWidth="1.600" />
    <path d="M1 1h8l4 4h10v6H1z" fill="url(#gBlue)" stroke="none" />
    <path d="M3 3h4.500L9 4.500 5 8.500H3z" fill="#fff" stroke="none" />
    <rect x="2.200" y="9.500" width="19.800" height="12" rx="2" fill="#eff0f1" stroke="url(#gBlue)" strokeWidth="1.600" />
  </>
);
const docsIco = (
  <>
    <path d="M9 4 10 1l13 2-1.500 15-2 .5" stroke="#189cf0" strokeWidth="1.800" />
    <path d="m4 21-3-16 12-3 .7 3" stroke="url(#gTrash)" strokeWidth="1.500" />
    <path d="M9 22H5.500V6h9l4 4v12h-3M9 11h3M8 15h8M8 18h8" stroke="#e8208c" strokeWidth="1.600" />
    <path d="M5.500 15v7H9m6 0h3.500v-7" stroke="#ff6a50" strokeWidth="1.600" />
  </>
);
const downIco = <path d="M8 0h8v8h5l-9 10L3 8h5zM1.500 20h21v3h-21z" fill="url(#gDown)" stroke="none" />;
const P = {
  home: (
    <>
      <path d="M1 12 12 1.500 23 12M3.500 11v11.500h5V16h6v6.500h6.500V11" stroke="url(#gGreen)" strokeWidth="2.600" />
      <path d="M18 1v6" stroke="url(#gGreen)" strokeWidth="3" />
    </>
  ),
  desktop: <path d="M3 2.500h18.500v14.500H3zM0 21.500h24" stroke="url(#gPurple)" strokeWidth="2.800" />,
  docs: docsIco,
  pics: (
    <>
      <rect x="1.200" y="1.200" width="21.600" height="21.600" rx="2.500" stroke="url(#gOrange)" strokeWidth="2.200" />
      <circle cx="17" cy="7" r="2.800" fill="url(#gOrange)" stroke="none" />
      <path d="m2 16 6-6 5 6 4-3 5 3" stroke="url(#gOrange)" strokeWidth="2.200" />
    </>
  ),
  term: <path d="m1 2 7 6.500L1 15M10 21.500h13" stroke="url(#gRed)" strokeWidth="4" strokeLinecap="round" />,
  blender: (
    <>
      <path d="M1.500 18 14 9H3.500M10 1l10 9" stroke="#f7a01c" strokeWidth="1.500" />
      <circle cx="14.500" cy="14" r="6.300" stroke="#f7a01c" strokeWidth="1.500" />
      <circle cx="15" cy="13.500" r="2" fill="#f7a01c" stroke="none" />
    </>
  ),
  folder: folderPath,
  down: downIco,
  music: (
    <>
      <path d="M9 19V5l13-3.500V17M9 9.500l13-3" stroke="url(#gMusic)" strokeWidth="2.800" />
      <circle cx="5.500" cy="19.500" r="3.200" stroke="url(#gMusic)" strokeWidth="2.600" />
      <circle cx="18.500" cy="17" r="3" stroke="url(#gMusic)" strokeWidth="2.600" />
    </>
  ),
  video: (
    <>
      <path d="M1.200 3.200h21.600v17.600H1.200z" stroke="url(#gOrange)" strokeWidth="2.200" />
      <path d="M10.500 6v7l6-3.500zM4 16.500h17M7 14v5" stroke="#ff9a10" strokeWidth="2" />
    </>
  ),
  trash: <path d="M2 4h21M5 4v18.500h16V4M9 3.500V1.500h7v2M10 9v9M15.500 9v9" stroke="url(#gTrash)" strokeWidth="2" />,
  net: (
    <>
      <circle cx="12" cy="12" r="10.800" stroke="url(#gNet)" strokeWidth="1.700" />
      <path d="M9 1.500Q2.500 12 9 22.500M15 1.500q6.500 10.500 0 21M4 4.500q8 6 16 0M4 19.500q8-6 16 0" stroke="url(#gNet)" strokeWidth="1.700" />
    </>
  ),
  server: (
    <>
      <rect x="1.500" y="1.500" width="21" height="21" rx="1.500" stroke="url(#gYellow)" strokeWidth="2.600" />
      <path d="M5 9.500h14M5 14.500h14M5 6h8M5 19h13" stroke="#ffb400" strokeWidth="1.300" />
      <path d="M16 6h3M16 11.800h3M16 17h3" stroke="#ffb400" strokeWidth="2" />
    </>
  ),
  clock: (
    <>
      <circle cx="12" cy="12" r="10.600" stroke="url(#gYellow)" strokeWidth="2.600" />
      <path d="M11.500 4.500v8H19" stroke="#ffc800" strokeWidth="3" />
    </>
  ),
  recent: (
    <>
      <path d="M2.600 3v18h10M21.500 6v6" stroke="#232629" strokeWidth="1.200" />
      <path d="M2 2h9l2 2h9v7l-8-3H8l-3 2H2z" fill="#232629" stroke="none" />
      <circle cx="17" cy="16.500" r="4.500" stroke="#232629" strokeWidth="1.200" fill="#eff0f2" />
      <path d="M17 13.500v3.500h2" stroke="#232629" strokeWidth="1.200" />
    </>
  ),
  disk: (
    <>
      <rect x="4" y="1.500" width="16" height="21" rx="1.500" stroke="url(#gDisk)" strokeWidth="2.400" fill="#9cc8ff" />
      <circle cx="12" cy="9" r="5.500" fill="#fff" stroke="url(#gDisk)" strokeWidth="2" />
      <circle cx="12" cy="9" r="2.800" fill="#ff4a30" stroke="none" />
      <path d="m5 20 5-6v7z" fill="#1840ff" stroke="none" />
      <path d="M14 18h5M14 20.500h5" stroke="#ff5040" strokeWidth="1.800" />
    </>
  ),
  phone: <><rect x="5" y="1.500" width="13.500" height="21" rx="1.500" stroke="url(#gPhone)" strokeWidth="2.200" /><path d="M9.500 18.500h5" stroke="url(#gPhone)" strokeWidth="2" /></>,
};

const PLACES = [["home", "Home"], ["desktop", "Desktop"], ["docs", "Documents"], ["pics", "Pictures"], ["term", "college_3s1"], ["docs", "obsi"], ["blender", "BlenderProj..."], ["folder", "addons"], ["down", "Downloads"], ["music", "Music"], ["video", "Videos"], ["trash", "Trash"], ["folder", "www"], ["folder", "3"], ["folder", "dolphin"], ["folder", ".config"], ["folder", "garuda-wall..."], ["folder", "OTXO_Relea..."], ["folder", "hyprc"]];

const Place = ({ k, t }) => (
  <div className="flex h-[31.2px] items-center gap-1.5 pl-1.5 whitespace-nowrap">
    <Ico className="h-6 w-6" vb="0 0 24 24">{P[k]}</Ico>
    <span>{t}</span>
  </div>
);
const Head = ({ children, className = "h-[35.2px] pt-1" }) => <div className={"flex items-center pl-[7px] text-[#7f8489] " + className}>{children}</div>;

function FileDoc({ a, b, id, kind }) {
  const s = `url(#${id})`;
  return (
    <svg className="block h-[74px] w-14" viewBox="0 0 56 74" fill="none" stroke={s}>
      <defs>
        <linearGradient id={id} gradientUnits="userSpaceOnUse" x1="4" y1={kind === "md" ? 10 : 36} x2="52" y2={kind === "md" ? 70 : 38}>
          <stop offset="0" stopColor={a} />
          <stop offset="1" stopColor={b} />
        </linearGradient>
      </defs>
      <path d="M2.500 71.500v-69H37L53.500 19v52.500z" fill="#fff" strokeWidth="5" />
      <path d="M33 1h5l17 17v4H41l-8-6z" fill={s} stroke="none" />
      <path d="M38 8.500V15q0 2.500 2.500 2.500H47z" fill="#fff" stroke="none" />
      {kind === "md" && (
        <>
          <circle cx="28" cy="34" r="11.700" strokeWidth="1.800" />
          <circle cx="28" cy="34" r="8.500" strokeWidth="1.400" />
          <circle cx="28" cy="29.500" r="1.600" strokeWidth="1.300" />
          <path d="M26.500 33.500h3.500V40h-4z" strokeWidth="1.300" />
          <path d="M11 51.700h34M11 61.700h23" strokeWidth="4.600" strokeLinecap="round" />
        </>
      )}
      {kind === "txt" && <path d="M11.500 40h33M11.500 49.700h33M11.500 59.500h22" strokeWidth="5" strokeLinecap="round" />}
      {kind === "csv" && (
        <>
          <rect x="13.500" y="32.500" width="29" height="30" rx="2" strokeWidth="3" />
          <path d="M13 42h30M13 52h30M28 32v30" strokeWidth="2.600" />
        </>
      )}
    </svg>
  );
}

const FILES = [
  { id: "f1", a: "#dc2c84", b: "#ff968a", kind: "md", l: ["day2.md"] },
  { id: "f2", a: "#adb4ff", b: "#a4e9ff", kind: "txt", l: [".~lock.Practical 3 -a-", "normdata.csv#"], dim: true },
  { id: "f3", a: "#08ad8f", b: "#66ff80", kind: "csv", l: ["Practical 3 -b-", "loaddatadate.csv"] },
  { id: "f4", a: "#2a98c0", b: "#8ce0e0", kind: "csv", l: ["Practical 3 -a-", "normdata.csv"], sel: true },
  { id: "f5", a: "#dc2c84", b: "#ff968a", kind: "md", l: ["day1.md"] },
];

const RMENU = [["File", "w-[22px]"], ["Edit", "w-[26px] ml-[26px]"], ["View", "w-[31px] ml-[26px]"], ["Go", "w-[19px] ml-[25px]"], ["Tools", "w-[35px] ml-[25px]"], ["Settings", "w-[54px] ml-[25px]"], ["Help", "w-[31px] ml-[25px]"]];
const ThinChevron = ({ className = "h-[7px] w-3", color = "#3b4045" }) => (
  <svg className={"block shrink-0 " + className} viewBox="0 0 12 7" fill="none" stroke={color} strokeWidth="1.300"><path d="m.5.500 5.500 5.500L11.500.500" /></svg>
);
const SmallChevron = ({ color }) => (
  <svg className="mt-7 ml-0.5 block h-1 w-[7px] shrink-0" viewBox="0 0 7 4" fill="none" stroke={color} strokeWidth="1.500"><path d="m.5.500 3 2.700 3-2.700" /></svg>
);
const X = () => <svg className="block h-[10px] w-[10px] shrink-0" viewBox="0 0 10 10" stroke="#8b8f93" strokeWidth="1.200"><path d="m.5.500 9 9m0-9-9 9" /></svg>;

function FilesWindow() {
  return (
    <div className="ml-0.5 h-[1022px] w-[953px] shrink-0 overflow-hidden rounded-[26px] border-4 border-[#595959aa] bg-[#eff0f2] bg-clip-padding font-['Noto_Sans',sans-serif] text-[14.67px] text-[#26292c]">
      <div className="flex h-9 items-center pb-0.5 pl-[13px]">{RMENU.map(([t, w]) => <Fit key={t} className={w}>{t}</Fit>)}</div>
      <div className="flex h-[53px] items-center border-b border-[#b9bbbd]">
        <Ico className="ml-[15px] h-6 w-6" vb="0 0 24 24" color="url(#gGray)" sw={2.400}><path d="M4.500 22V4.500a2.500 2.500 0 0 1 2.500-2.500h10a2.500 2.500 0 0 1 2.500 2.500V22L16 19.500h-2l-2 2-2-2H8zM12 5v9M7.500 9.500h9" /></Ico>
        <svg className="ml-[21px] h-7 w-4 shrink-0" viewBox="4 -2 16 28" fill="none" stroke="url(#gBack)" strokeWidth="5.500" strokeLinecap="round"><path d="M17 2 7.500 12 17 22" /></svg>
        <SmallChevron color="#333" />
        <svg className="ml-[15px] h-7 w-4 shrink-0" viewBox="4 -2 16 28" fill="none" stroke="url(#gGray)" strokeWidth="5.500" strokeLinecap="round"><path d="M7 2l9.500 10L7 22" /></svg>
        <SmallChevron color="#999" />
        <svg className="ml-3 h-4 w-[26px] shrink-0" viewBox="0 0 26 16" fill="none" stroke="url(#gUp)" strokeWidth="5.500" strokeLinecap="round"><path d="M3 13 13 3l10 10" /></svg>
        <div className="ml-3 h-10 w-px shrink-0 bg-[#c4c6c8]" />
        <div className="ml-[4px] flex h-[38px] w-[524px] shrink-0 items-center rounded-[6px] border border-[#c0c2c4] bg-white">
          <svg className="ml-[10px] h-[18px] w-[18px] shrink-0" viewBox="0 0 24 24" fill="none" stroke="url(#gGreen)" strokeWidth="2"><path d="M1 22V2h8l4 4h10v16z" /><path d="M1 2h8l4 4h10v5H5z" fill="url(#gGreen)" /><path d="M2.500 3.500h5L3 8z" fill="#fff" stroke="none" /><rect x="2" y="10" width="21" height="12" rx="2" fill="#fff" /></svg>
          <Fit className="ml-[3px] w-[433px]">ome/ahmed/Desktop/college_3s1/college_3y_s1/b3_sar/week_8/</Fit>
          <svg className="ml-[9px] h-[13px] w-[17px] shrink-0" viewBox="0 0 17 13"><path d="M5 0h12v13H5L0 6.500z" fill="#ee0a68" /><path d="m8 4 5 5m0-5L8 9" stroke="#fff" strokeWidth="1.900" /></svg>
          <ThinChevron className="ml-[12px] h-[7px] w-3" />
        </div>
        <svg className="ml-[4px] h-6 w-6 shrink-0" viewBox="0 0 24 24" fill="url(#gCheck)"><path d="M0 10h6.500l4.500 3.500L9.500 19zM9.500 16.500 16.500 4H24L13 15z" /></svg>
        <Ico className="ml-[9px] h-[26px] w-[27px]" vb="0 0 26 26" color="url(#gSort)" sw={2.200}><path d="M0 2.500h9M3 10h5M0 16.500h8M0 23.500h14M14.500 18V3m-5 5 5-5 5 5M20 9v14m-5-5 5 5 5-5" /></Ico>
        <Ico className="ml-[15px] h-6 w-6" vb="0 0 24 24" color="url(#gLime)" sw={2.400}><rect x="1.200" y="1.200" width="21.600" height="21.600" rx="1" /><path d="M6.500 3v19M1 3h22M10 13h9M14.500 8.500v9" /></Ico>
        <Ico className="ml-[17px] h-6 w-6" vb="0 0 24 24" color="url(#gMag)"><circle cx="15.500" cy="8.500" r="7.300" strokeWidth="2" /><circle cx="15.500" cy="8.500" r="4.500" strokeWidth="1.400" /><path d="m10 14-8 8" strokeWidth="4.500" strokeLinecap="round" /><path d="m8 16-5 5" stroke="#eff0f2" strokeWidth="1" strokeDasharray="2 1.500" /></Ico>
        <Ico className="ml-[17px] h-6 w-6" vb="0 0 24 24" color="url(#gHot)" sw={2.200}><path d="M1.200 1.200h21.600v21.600H1.200zM5 6l5.500 5.500L5 17M12.500 17H20" /></Ico>
        <div className="ml-[10px] flex h-[38px] w-[38px] shrink-0 items-center justify-center rounded-[6px] bg-[#d6d7d9]">
          <Ico className="h-6 w-6" vb="0 0 24 24" color="url(#gTeal)" sw={2.400}><path d="M1.500 12Q6 4 12 4t10.500 8Q18 20 12 20T1.500 12z" /><circle cx="12" cy="12" r="4" fill="url(#gTeal)" stroke="none" /></Ico>
        </div>
      </div>
      <div className="flex h-[925px]">
        <div className="w-[137px] shrink-0 overflow-hidden border-r border-[#c4c6c8] text-[14.4px]">
          <Head className="h-[35.4px] pt-[7px]">Places</Head>
          {PLACES.map(([k, t]) => <Place key={t} k={k} t={t} />)}
          <Head>Remote</Head>
          <Place k="net" t="Network" />
          <Place k="server" t="192.168.1.212" />
          <Head className="h-[35.2px] pt-1.5">Recent</Head>
          <Place k="clock" t="Recent Files" />
          <Place k="recent" t="Recent Loca..." />
          <Head className="h-[33px] pt-2">Devices</Head>
          <div className="flex h-[33px] items-center gap-1.5 pl-1.5">
            <Ico className="h-6 w-6" vb="0 0 24 24">{P.disk}</Ico>
            <div className="w-[95px]"><div className="-mt-px h-[22px]">root</div><div className="h-[3px] rounded-full bg-[#c8cacc]"><div className="h-full w-[60px] rounded-l-full bg-[#bfdcf3]" /></div></div>
          </div>
          <Place k="phone" t="ahmed-ms7..." />
        </div>
        <div className="w-[25px] shrink-0 border-r border-[#c4c6c8] pt-[5px] pl-[7px]"><div className="h-[832px] w-[9px] rounded-full border border-[#bcbebe] bg-[#c9caca]" /></div>
        <div className="flex min-w-0 flex-1 flex-col">
          <div className="flex h-[39px] shrink-0 pt-px pl-0.5">
            <div className="flex h-[38px] w-[125px] items-center rounded-t-[5px] border-t-[3px] border-[#bcdcf3] pb-[3px] shadow-[-1px_0_0_#d0d2d4]">
              <Ico className="ml-[9px] h-[18px] w-[18px]" vb="0 0 24 24">{folderPath}</Ico>
              <Fit className="ml-[11px] w-[50px] pt-px">week_8</Fit><span className="ml-[14px]"><X /></span>
            </div>
            <div className="flex h-[36px] w-[154px] items-center rounded-t-[5px] bg-[#c6c7c9] pb-px">
              <Ico className="-mt-0.5 ml-[13px] h-[17px] w-[17px]" vb="0 0 24 24">{downIco}</Ico>
              <Fit className="ml-[10px] w-[75px] pt-0.5">Downloads</Fit><span className="ml-[14px]"><X /></span>
            </div>
          </div>
          <div className="flex flex-1 bg-white pt-[14px] pl-[3px] text-[14.3px]">
            {FILES.map((f) => (
              <div key={f.id} className={"flex w-[142.7px] shrink-0 flex-col items-center text-center leading-5 whitespace-nowrap " + (f.dim ? "text-[#7b7f83]" : "")}>
                <FileDoc {...f} />
                <div className={"mt-px px-[3px] pt-[2px] pb-[3px] " + (f.sel ? "bg-[#c0def4]" : "")}>{f.l.map((x) => <div key={x}>{x}</div>)}</div>
              </div>
            ))}
          </div>
          <div className="flex h-[38px] shrink-0 items-start border-b border-[#bfc1c3]">
            <svg className="mt-[9px] ml-[9px] h-[17px] w-[15px]" viewBox="0 0 18 22" fill="none" stroke="url(#gTeal)" strokeWidth="2.600"><rect x="1.500" y="9" width="15" height="11.500" rx="3" /><path d="M5 9V5q0-3.500 4-3.500 3.500 0 4.500 3" /><path d="M7 14.700h4" strokeWidth="3" /></svg>
            <div className="ml-[17px] h-[37px] w-[702px] rounded-[6px] border border-[#c0c2c4] bg-white pl-2 leading-[35px] text-[#85898d]">Filter...</div>
            <svg className="mt-2 ml-[14px] h-[19px] w-[19px]" viewBox="0 0 24 24" fill="none" stroke="url(#gClose)"><circle cx="12" cy="12" r="10.500" strokeWidth="2.400" /><path d="m8.500 8.500 7 7m0-7-7 7" strokeWidth="3.200" /></svg>
          </div>
          <div className="flex h-[35px] shrink-0 items-center pb-px pl-[7px]">
            <Fit className="w-[363px]">Practical 3 -a-normdata.csv (CSV document, 164.1 KiB)</Fit>
            <div className="ml-[204px] h-[7px] w-[68px] overflow-hidden rounded-full border border-[#bfc1c3] bg-[#cfd1d2]"><div className="h-full w-[42px] bg-[#cde4f5]" /></div>
            <Fit className="ml-[18px] w-[86px]">36.9 GiB free</Fit>
            <ThinChevron className="ml-3 h-[7px] w-3" />
          </div>
        </div>
      </div>
    </div>
  );
}

/* ---------- status bar ---------- */
const Dot = () => <div className="h-[19px] w-[19px] shrink-0 rounded-full bg-[#c6cad8]" />;

function TopBar() {
  return (
    <div className="flex h-[47px] shrink-0 border-t border-b border-t-black border-b-[#7f849c] bg-[#11111b] font-['Noto_Sans',sans-serif] text-lg font-bold text-[#bac2de]">
      <div className="flex w-[130px] items-center pt-0.5 pl-[5px]">
        <Fit className="w-[15px]">1:</Fit><span className="ml-1.5"><Dot /></span>
        <Fit className="ml-[3px] w-[15px]">2:</Fit><span className="ml-1.5"><Dot /></span>
        <Fit className="ml-[3px] w-[15px]">3:</Fit><span className="ml-1.5"><Dot /></span>
      </div>
      <div className="flex w-[43px] items-center border-t-2 border-[#cba6f7] bg-[#0b0b12] pt-0.5 pl-1 text-[#cba6f7]">
        <Fit className="w-4">4:</Fit>
        <svg className="ml-1.5 h-[19px] w-[19px] shrink-0" viewBox="0 0 19 19"><circle cx="9.500" cy="9.500" r="8.600" fill="none" stroke="#cba6f7" strokeWidth="1.600" /><circle cx="9.500" cy="9.500" r="3.500" fill="#cba6f7" /></svg>
      </div>
      <div className="flex w-[757px] items-center pl-[21px] text-[#6c7086]"><Fit className="w-[120px]">Format Cells</Fit></div>
      <div className="mb-px flex w-[59px] items-center justify-center border-b-2 border-[#eba0ac] text-[#eba0ac]"><Fit className="w-[49px]">13:07</Fit></div>
      <div className="mb-px ml-[476px] flex w-[78px] items-center border-b-2 border-[#89b4fa] pl-[4px] text-[#89b4fa]">
        <Fit className="w-7">5%</Fit>
        <svg className="ml-[5px] h-4 w-[13px] shrink-0" viewBox="0 0 13 16" fill="#89b4fa"><path d="M0 5.500q0-1 1-1h4L12 0h.7v16H12L5 11.500H1q-1 0-1-1z" /></svg>
        <svg className="ml-[12px] h-[21px] w-[22px] shrink-0" viewBox="0 0 22 21" fill="none" stroke="#89b4fa" strokeWidth="2"><rect x="8" y="2" width="6" height="10" rx="3" fill="#89b4fa" /><path d="M4.500 9q0 6 6.500 6t6.500-6M11 15v4M7 19.500h8" /><path d="m0 1 21 18" stroke="#11111b" strokeWidth="4" /><path d="m0 1 21 18" /></svg>
      </div>
      <svg className="mt-[12px] ml-[7px] h-5 w-[13px]" viewBox="0 0 13 20" fill="#6c7086"><path d="M10 0 0 11h5L2 20 13 8H7.500L12 0z" /></svg>
      <div className="mb-px ml-[7px] flex w-[74px] items-center border-b-2 border-[#a6e3a1] pl-1 text-[#a6e3a1]">
        <Fit className="w-[39px]">97%</Fit>
        <svg className="ml-[5px] h-5 w-[22px] shrink-0" viewBox="0 0 22 20"><path d="M1 2q0-2 2-2h7q2 0 2 2v15.500h1V20H0v-2.500h1z" fill="#a6e3a1" /><path d="M8 3 4 9h3l-1 5 4-6H7z" fill="#11111b" /><path d="M12 11q3 0 3 3 0 2 1.500 2t1.500-2v-4M16 3v3M20 3v3" fill="none" stroke="#a6e3a1" strokeWidth="1.700" /><path d="M14.500 6H22v2q0 3-3.700 3t-3.800-3z" fill="#a6e3a1" /></svg>
      </div>
      <div className="mt-px mb-px ml-3 flex w-[233px] items-center bg-[#2980b9]">
        <svg className="ml-[5px] h-6 w-6 shrink-0" viewBox="0 0 24 24">
          <path d="M14 .5C7 1.500 1 7.500 1 14.500 1 20 5 23 10 23c3 0 6-1 8-3-9 2.500-14-2-13.500-8C5 6.500 9 2.500 14 .5z" fill="#ffd428" />
          <path d="M14 .5c6-1 9.500 2.500 9.500 8.500C23.500 17 17.500 24 10.500 24 6.500 24 3 22 1.500 18.500c4 3.500 8.500 4 12.500 1.500 4.500-2.500 7-7.500 7-12C21 3.500 18.500 1 14 .5z" fill="#f07030" />
          <path d="M14 .5C8 2 3.500 7 3 13c1-6 5-10.500 11-12.500z" fill="#f07030" />
        </svg>
        <svg className="ml-[27px] h-6 w-6 shrink-0" viewBox="0 0 24 24" fill="none" stroke="url(#gWifi)" strokeWidth="3"><path d="M1.500 9.500Q12 1 22.500 9.500M5.500 14q6.500-5.500 13 0" /><path d="M8 18q4-3 8 0l-4 3.500z" fill="url(#gWifi)" stroke="none" /></svg>
        <svg className="ml-[24px] h-6 w-[26px] shrink-0" viewBox="0 0 26 24"><path d="M7 5Q13 3 19 5q4 1 5 8t1 5q-3 2-6 2l-2-2H9l-2 2q-3 0-6-2 0-1 1-8T7 5z" fill="#fff" stroke="#555" strokeWidth=".7" /><ellipse cx="9" cy="13" rx="2.300" ry="2.500" fill="#445" /><ellipse cx="17" cy="13" rx="2.300" ry="2.500" fill="#445" /><circle cx="21" cy="5" r="4" fill="#f03a3a" /></svg>
        <svg className="ml-[24px] h-6 w-[25px] shrink-0" viewBox="0 0 25 24"><circle cx="13" cy="4" r="4" fill="#5059c9" /><circle cx="21" cy="5.500" r="2.800" fill="#3f46b0" /><path d="M7 9h12v8q0 6-6 6t-6-6z" fill="#5059c9" /><path d="M18.500 9H25v7q0 3-4 3h-2.500z" fill="#3f46b0" /><rect x="0" y="5.500" width="13.500" height="13" rx="1" fill="#3940ab" /><path d="M3.500 9h6M6.500 9v6.500" stroke="#fff" strokeWidth="1.700" /></svg>
        <svg className="ml-[25px] h-6 w-6 shrink-0" viewBox="0 0 24 24"><path d="M0 0h24v24H0z" fill="#4d3b38" /><path d="M3 2h6.500l3 10-3 10H3V12z" fill="#ff9a10" /><path d="m3 12 5-2v12H3z" fill="#ffb818" /><path d="m3 5 6 7-6 2z" fill="#ff3a10" /><path d="m12 12 9-10v7l-4 3 4 6v4z" fill="#0c8a78" /><path d="m12 12 6-2v4z" fill="#2aa01c" /></svg>
      </div>
      <svg className="mt-[13px] ml-[7px] h-[19px] w-4" viewBox="0 0 16 19" fill="none" stroke="#6c7086" strokeWidth="2.200" strokeLinecap="round"><path d="M4 5a6.800 6.800 0 1 0 8 0M8 1v8" /></svg>
    </div>
  );
}

export default function App() {
  return (
    <div className="relative flex h-[1080px] w-[1920px] flex-col overflow-hidden bg-[#0e1a48]">
      <Defs />
      <TopBar />
      <div className="relative flex flex-1 bg-[linear-gradient(180deg,#232f60_0%,#3a2c62_8%,#7a3568_18%,#b03a6b_23.600%,#4a2a70_23.800%,#5c2c72_34%,#e0386a_42%,#ff3f6c_53%,#4c2d72_54%,#4e3078_72%,#3a2c60_80%,#141f55_88%,#14205a_100%)]">
        <svg className="absolute inset-x-0 top-0 h-8 w-full" viewBox="0 0 1920 32" preserveAspectRatio="none">
          <path d="M0 0h1920v10H0z" fill="#212c5c" />
          <path d="M0 31 32 0" stroke="#ff4f78" strokeWidth="2" />
          <path d="m1412 9 14-9" stroke="#a8406a" strokeWidth="1.500" />
          <path d="M1610 0h14l6 9h-10zM1640 0l-6 9h3zM1655 0l-8 9h4zM1670 0l-10 9h4zM1685 0l-14 9h5zM1700 0l-18 9h5z" fill="#070b28" />
          <path d="M204 3h2v2h-2zM334 3h1v2h-1zM506 2h2v2h-2zM631 2h2v2h-2zM672 1h2v2h-2zM774 3h1v2h-1zM1372 2h2v2h-2zM1852 1h2v2h-2zM1914 5h2v2h-2z" fill="#b8cfe0" />
        </svg>
        <div className="relative flex flex-1 bg-[linear-gradient(90deg,transparent_80%,#02082699_100%)] pt-[5px] pl-1.5">
          <OfficeWindow />
          <FilesWindow />
        </div>
      </div>
      <Dialog />
    </div>
  );
}
